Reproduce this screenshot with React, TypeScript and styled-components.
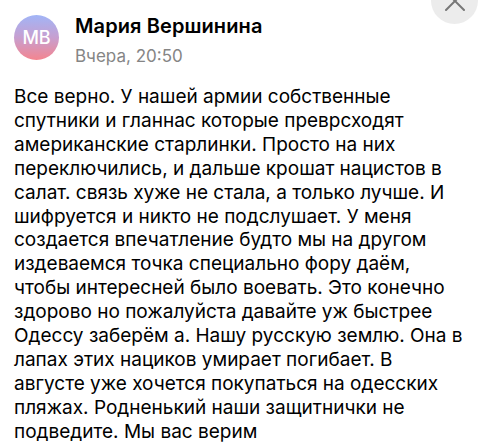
import React from "react";
import styled, { createGlobalStyle } from "styled-components";

const Global = createGlobalStyle`
  html, body { margin: 0; padding: 0; background: #ffffff; }
  body { font-family: Inter, Roboto, "Noto Sans", sans-serif; color: #000; }
`;

const Card = styled.div`
  position: relative;
  width: 482px;
  height: 447px;
  overflow: hidden;
  background: #fff;
  box-sizing: border-box;
  padding: 15px 6px 0 14px;
`;

const Header = styled.div`
  display: flex;
  align-items: flex-start;
  gap: 16px;
`;

const Avatar = styled.div`
  width: 45px;
  height: 45px;
  border-radius: 50%;
  background: linear-gradient(180deg, #a1b5f7 0%, #c79fd0 50%, #f4858f 100%);
  color: #fff;
  display: flex;
  align-items: center;
  justify-content: center;
  font-size: 18px;
  font-weight: 500;
  flex-shrink: 0;
`;

const Meta = styled.div`
  display: flex;
  flex-direction: column;
  gap: 9px;
`;

const Name = styled.div`
  font-size: 20px;
  line-height: 22px;
  font-weight: 600;
  letter-spacing: 0.1px;
  color: #000;
`;

const Time = styled.div`
  font-size: 17px;
  line-height: 20px;
  color: #858585;
`;

const Body = styled.p`
  margin: 19px 0 0 0;
  font-size: 19px;
  line-height: 23.9px;
  color: #000;
  white-space: nowrap;
`;

const Close = styled.button`
  position: absolute;
  top: -23px;
  right: 4px;
  width: 47px;
  height: 47px;
  border-radius: 50%;
  border: none;
  background: #ececec;
  padding: 0;
  display: flex;
  align-items: center;
  justify-content: center;
`;

const lines = [
  "Все верно. У нашей армии собственные",
  "спутники и гланнас которые преврсходят",
  "американские старлинки. Просто на них",
  "переключились, и дальше крошат нацистов в",
  "салат. связь хуже не стала, а только лучше. И",
  "шифруется и никто не подслушает. У меня",
  "создается впечатление будто мы на другом",
  "издеваемся точка специально фору даём,",
  "чтобы интересней было воевать. Это конечно",
  "здорово но пожалуйста давайте уж быстрее",
  "Одессу заберём а. Нашу русскую землю. Она в",
  "лапах этих нациков умирает погибает. В",
  "августе уже хочется покупаться на одесских",
  "пляжах. Родненький наши защитнички не",
  "подведите. Мы вас верим",
];

export default function App() {
  return (
    <>
      <Global />
      <Card>
        <Close aria-label="close">
          <svg width="24" height="24" viewBox="0 0 24 24">
            <path d="M3 3 L21 21 M21 3 L3 21" stroke="#777" strokeWidth="2" strokeLinecap="round" fill="none" />
          </svg>
        </Close>
        <Header>
          <Avatar>МВ</Avatar>
          <Meta>
            <Name>Мария Вершинина</Name>
            <Time>Вчера, 20:50</Time>
          </Meta>
        </Header>
        <Body>
          {lines.map((l, i) => (
            <React.Fragment key={i}>
              {l}
              {i < lines.length - 1 && <br />}
            </React.Fragment>
          ))}
        </Body>
      </Card>
    </>
  );
}
